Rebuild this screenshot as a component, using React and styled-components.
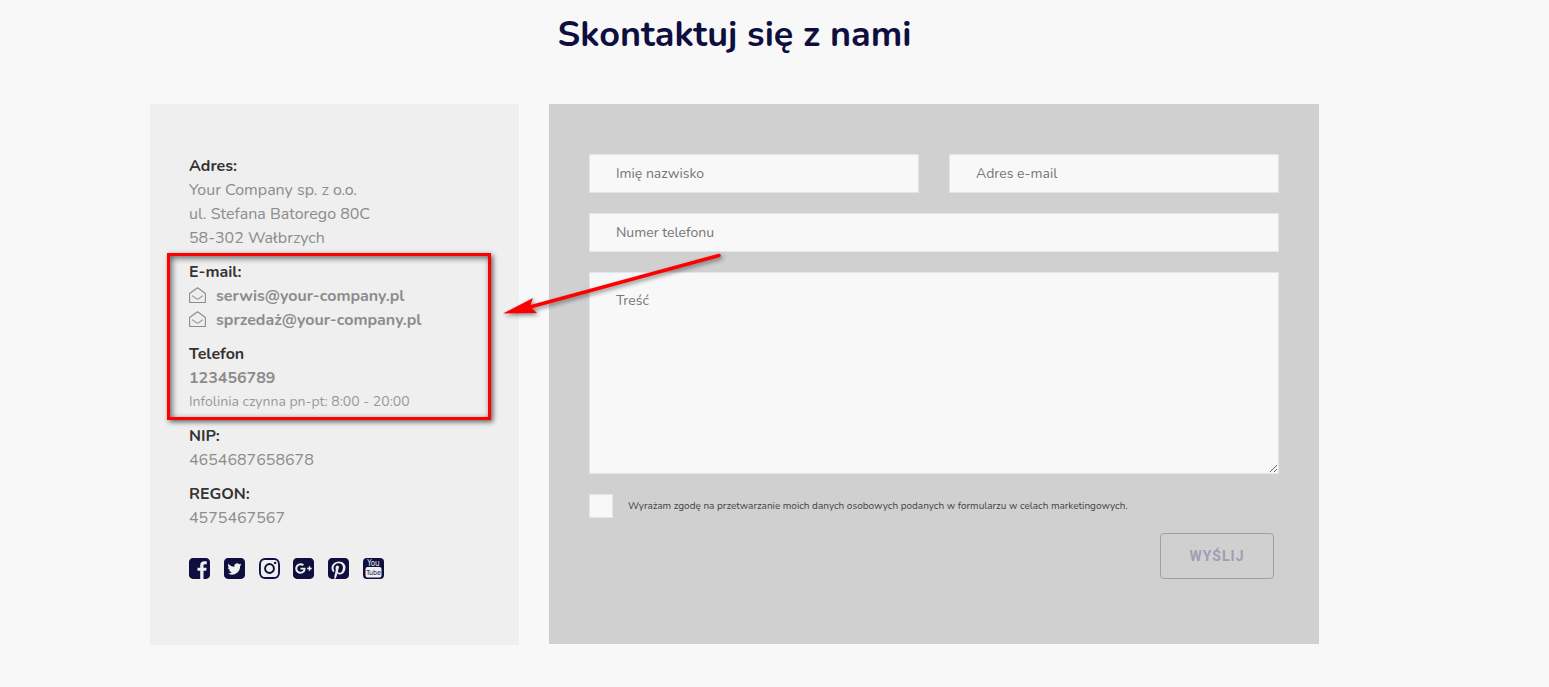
import React from "react";
import styled, { createGlobalStyle } from "styled-components";

const GlobalStyle = createGlobalStyle`
  *, *::before, *::after { box-sizing: border-box; }
  body {
    margin: 0;
    background: #f8f8f8;
    color: #8c8c8c;
    font-family: Nunito, "Noto Sans", sans-serif;
    font-size: 16px;
    line-height: 24px;
  }
`;

const Page = styled.main`
  padding: 11px 80px 42px 0;
`;

const Title = styled.h1`
  margin: 0 0 45px;
  color: #0e0e3f;
  font-size: 36px;
  font-weight: 700;
  line-height: 48px;
  text-align: center;
`;

const Columns = styled.div`
  display: grid;
  grid-template-columns: minmax(0, 369fr) minmax(0, 770fr);
  gap: 30px;
  max-width: 1169px;
  margin: 0 auto;
`;

const InfoPanel = styled.section`
  padding: 50px 39px 66px;
  background: #efefef;
`;

const Group = styled.div`
  margin-bottom: 10px;
`;

const Label = styled.h2`
  margin: 0;
  color: #333;
  font-size: 16px;
  font-weight: 700;
  line-height: 24px;
`;

const Line = styled.p`
  margin: 0;
  font-size: ${(p) => (p.$small ? "14px" : "16px")};
  color: ${(p) => (p.$small ? "#999" : "#8c8c8c")};
`;

const ContactLink = styled.a`
  display: flex;
  align-items: center;
  gap: 10px;
  color: #8c8c8c;
  font-weight: 700;
  text-decoration: none;
`;

const Highlighted = styled.div`
  position: relative;
  margin-bottom: 10px;

  & > ${Group}:nth-of-type(2) { margin-bottom: 0; }
`;

const Frame = styled.span`
  position: absolute;
  inset: -7px -11px -6px -22px;
  border: 3px solid #f00;
  box-shadow: 2px 2px 5px rgba(0, 0, 0, 0.6), inset 2px 2px 6px rgba(0, 0, 0, 0.6);
  pointer-events: none;
`;

const Socials = styled.nav`
  display: flex;
  justify-content: space-between;
  max-width: 195px;
  margin-top: 28px;
`;

const SocialLink = styled.a`
  display: block;
  width: 21px;
  height: 21px;
  color: #0e0e3f;

  svg { display: block; }
`;

const FormPanel = styled.form`
  position: relative;
  display: grid;
  grid-template-columns: repeat(2, minmax(0, 1fr));
  gap: 20px 30px;
  align-self: start;
  padding: 50px 40px 65px;
  background: #d0d0d0;
`;

const Field = styled.input`
  grid-column: ${(p) => (p.$wide ? "1 / -1" : "auto")};
  width: 100%;
  height: 39px;
  padding: 0 26px;
  border: 1px solid #e4e4ee;
  border-radius: 0;
  background: #f8f8f8;
  color: #444;
  font: 400 14px/20px Nunito, "Noto Sans", sans-serif;

  &::placeholder { color: #757575; opacity: 1; }
`;

const Message = styled(Field)`
  height: 202px;
  padding: 18px 26px;
  resize: vertical;
`;

const Actions = styled.div`
  grid-column: 1 / -1;
  display: flex;
  flex-direction: column;
  gap: 15px;
`;

const Consent = styled.label`
  display: flex;
  align-items: center;
  gap: 15px;
  color: #444;
  font-size: 10px;
`;

const Checkbox = styled.input`
  appearance: none;
  width: 24px;
  height: 24px;
  margin: 0;
  border: 1px solid #e4e4ee;
  background: #f8f8f8;
`;

const Submit = styled.button`
  align-self: flex-end;
  width: 114px;
  height: 46px;
  margin-right: 5px;
  border: 1px solid #9f9eb2;
  border-radius: 4px;
  background: transparent;
  color: #9f9eb2;
  font: 700 14px/20px Roboto, "Liberation Sans", sans-serif;
  letter-spacing: 1px;
`;

const Arrow = styled.svg`
  position: absolute;
  top: 140px;
  left: -54px;
  overflow: visible;
  pointer-events: none;
  filter: drop-shadow(2px 2px 2px rgba(0, 0, 0, 0.45));
`;

const MailIcon = () => (
  <svg width="17" height="18" viewBox="0 0 17 18" fill="none" stroke="#8c8c8c" strokeWidth="1.1" aria-hidden="true">
    <path d="M.6 6.500 8.500 .8 16.400 6.500v9H.6z" strokeLinejoin="round" />
    <path d="M3.200 8.600 7.200 11.600q1.300.9 2.600 0L13.800 8.600" />
  </svg>
);

const square = "M1664 416v960q0 119-84.5 203.5t-203.5 84.5h-960q-119 0-203.5-84.5t-84.5-203.5v-960q0-119 84.5-203.5t203.5-84.5h960q119 0 203.5 84.5t84.5 203.5z";

const socials = [
  { name: "Facebook", d: "M1376 128q119 0 203.5 84.5t84.5 203.5v960q0 119-84.5 203.5t-203.5 84.5h-188v-595h199l30-232h-229v-148q0-56 23.5-84t91.5-28l122-1v-207q-63-9-178-9-136 0-217.5 80t-81.5 226v171h-200v232h200v595h-532q-119 0-203.5-84.5t-84.5-203.5v-960q0-119 84.5-203.5t203.5-84.5h960z" },
  { name: "Twitter", d: "M1408 610q-56 25-121 34 68-40 93-117-65 38-134 51-61-66-153-66-87 0-148.5 61.5t-61.5 148.5q0 29 5 48-129-7-242-65t-192-155q-29 50-29 106 0 114 91 175-47-1-100-26v2q0 75 50 133.5t123 72.5q-29 8-51 8-13 0-39-4 21 63 74.5 104t121.5 42q-116 90-261 90-26 0-50-3 148 94 322 94 112 0 210-35.5t168-95 120.5-137 75-162 24.5-168.5q0-18-1-27 63-45 105-109z" + square },
  { name: "Instagram", d: "M1152 896q0-106-75-181t-181-75-181 75-75 181 75 181 181 75 181-75 75-181zm138 0q0 164-115 279t-279 115-279-115-115-279 115-279 279-115 279 115 115 279zm108-410q0 38-27 65t-65 27-65-27-27-65 27-65 65-27 65 27 27 65zm-502-220q-7 0-76.5-.5t-105.5 0-96.5 3-103 10-71.5 18.5q-50 20-88 58t-58 88q-11 29-18.5 71.5t-10 103-3 96.5 0 105.5.5 76.5-.5 76.5 0 105.5 3 96.5 10 103 18.5 71.5q20 50 58 88t88 58q29 11 71.5 18.5t103 10 96.5 3 105.5 0 76.5-.5 76.5.5 105.5 0 96.5-3 103-10 71.5-18.5q50-20 88-58t58-88q11-29 18.5-71.5t10-103 3-96.5 0-105.5-.5-76.5.5-76.5 0-105.5-3-96.5-10-103-18.5-71.5q-20-50-58-88t-88-58q-29-11-71.5-18.5t-103-10-96.5-3-105.5 0-76.5.5zm768 630q0 229-5 317-10 208-124 322t-322 124q-88 5-317 5t-317-5q-208-10-322-124t-124-322q-5-88-5-317t5-317q10-208 124-322t322-124q88-5 317-5t317 5q208 10 322 124t124 322q5 88 5 317z" },
  { name: "Google+", d: "M1045 905q0-26-6-64h-362v132h217q-3 24-16.5 50t-37.5 53-66.5 44.5-96.5 17.5q-99 0-169-71t-70-171 70-171 169-71q92 0 153 59l104-101q-108-100-257-100-160 0-272 112.5t-112 271.5 112 271.5 272 112.5q165 0 266.5-105t101.5-270zm345 46h109v-110h-109v-110h-110v110h-110v110h110v110h110v-110z" + square },
  { name: "Pinterest", d: "M1376 128q119 0 203.5 84.5t84.5 203.5v960q0 119-84.5 203.5t-203.5 84.5h-725q85-122 108-210 9-34 53-209 21 39 73.5 67t112.5 28q181 0 295.5-147.5t114.5-373.5q0-84-35-162.5t-96.5-139-152.5-97-197-36.5q-104 0-194.5 28.5t-153 76.5-107.5 109.5-66.5 128-21.5 132.5q0 102 39.5 180t116.5 110q13 5 23.5 0t14.5-19q10-44 15-61 6-23-11-42-50-62-50-150 0-150 103.5-256.5t270.5-106.5q149 0 232.5 81t83.5 210q0 168-67.5 286t-173.5 118q-60 0-97-43.5t-23-103.5q8-34 26.5-92.5t29.5-102 11-74.5q0-49-26.5-81.5t-75.5-32.5q-61 0-103.5 56.5t-42.5 139.5q0 72 24 121l-98 414q-24 100-7 254h-183q-119 0-203.5-84.5t-84.5-203.5v-960q0-119 84.5-203.5t203.5-84.5h960z" },
];

const YouTubeIcon = () => (
  <svg width="21" height="21" viewBox="0 0 21 21" aria-hidden="true">
    <rect width="21" height="21" rx="4" fill="currentColor" />
    <rect x="2.5" y="9" width="16" height="10.5" rx="2" fill="#efefef" />
    <g fontFamily="DejaVu Sans Condensed, sans-serif" fontSize="8" textAnchor="middle">
      <text x="10.5" y="8" fill="#efefef">You</text>
      <text x="10.5" y="17" fontSize="7" fill="currentColor">Tube</text>
    </g>
  </svg>
);

export default function App() {
  return (
    <>
      <GlobalStyle />
      <Page>
        <Title>Skontaktuj się z nami</Title>
        <Columns>
          <InfoPanel>
            <Group>
              <Label>Adres:</Label>
              <Line>Your Company sp. z o.o.</Line>
              <Line>ul. Stefana Batorego 80C</Line>
              <Line>58-302 Wałbrzych</Line>
            </Group>
            <Highlighted>
              <Group>
                <Label>E-mail:</Label>
                <ContactLink href="mailto:serwis@your-company.pl"><MailIcon />serwis@your-company.pl</ContactLink>
                <ContactLink href="mailto:sprzedaż@your-company.pl"><MailIcon />sprzedaż@your-company.pl</ContactLink>
              </Group>
              <Group>
                <Label>Telefon</Label>
                <ContactLink href="tel:123456789">123456789</ContactLink>
                <Line $small>Infolinia czynna pn-pt: 8:00 - 20:00</Line>
              </Group>
              <Frame />
            </Highlighted>
            <Group>
              <Label>NIP:</Label>
              <Line>4654687658678</Line>
            </Group>
            <Group>
              <Label>REGON:</Label>
              <Line>4575467567</Line>
            </Group>
            <Socials aria-label="Social media">
              {socials.map((s) => (
                <SocialLink key={s.name} href="#" aria-label={s.name}>
                  <svg width="21" height="21" viewBox="128 128 1536 1536" fill="currentColor" aria-hidden="true">
                    <path d={s.d} />
                  </svg>
                </SocialLink>
              ))}
              <SocialLink href="#" aria-label="YouTube"><YouTubeIcon /></SocialLink>
            </Socials>
          </InfoPanel>
          <FormPanel onSubmit={(e) => e.preventDefault()}>
            <Field type="text" placeholder="Imię nazwisko" aria-label="Imię nazwisko" />
            <Field type="email" placeholder="Adres e-mail" aria-label="Adres e-mail" />
            <Field $wide type="tel" placeholder="Numer telefonu" aria-label="Numer telefonu" />
            <Message as="textarea" $wide placeholder="Treść" aria-label="Treść" />
            <Actions>
              <Consent>
                <Checkbox type="checkbox" />
                Wyrażam zgodę na przetwarzanie moich danych osobowych podanych w formularzu w celach marketingowych.
              </Consent>
              <Submit type="submit">WYŚLIJ</Submit>
            </Actions>
            <Arrow width="230" height="80" viewBox="495 244 230 80" aria-hidden="true">
              <path d="M719 255.500 530 307" stroke="#f00" strokeWidth="3.500" strokeLinecap="round" />
              <path d="M503 313.500 533 298 530 306.500 537 313z" fill="#f00" />
            </Arrow>
          </FormPanel>
        </Columns>
      </Page>
    </>
  );
}
